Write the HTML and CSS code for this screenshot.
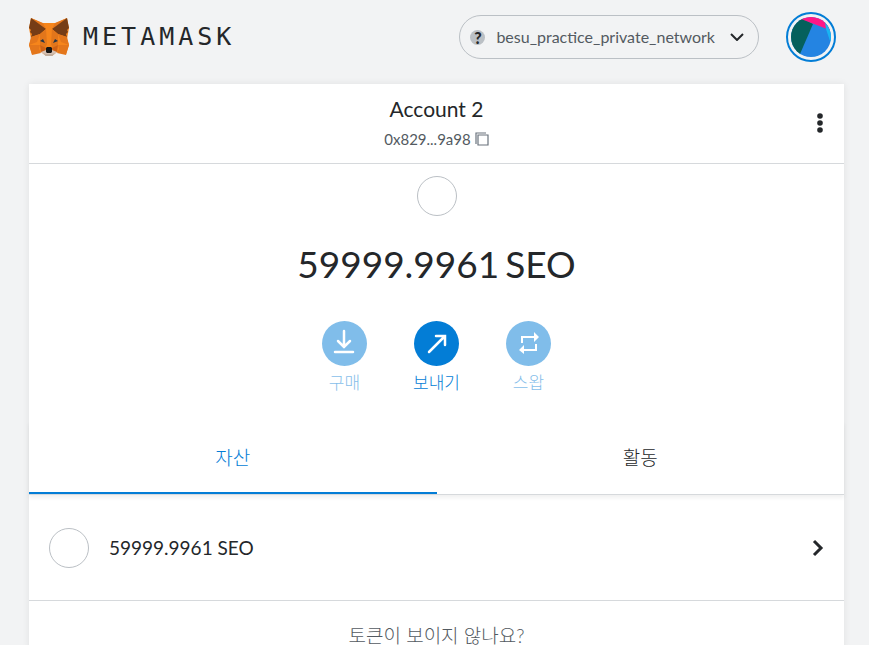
FILE: index.html
```html
<!DOCTYPE html>
<html lang="ko">
<head>
<meta charset="utf-8">
<meta name="viewport" content="width=device-width, initial-scale=1">
<title>MetaMask</title>
<link rel="stylesheet" href="styles.css">
</head>
<body>
<header class="header">
  <a class="brand" href="#" aria-label="MetaMask">
    <svg class="fox" viewBox="0 0 42 40" aria-hidden="true">
      <path fill="#f6851b" d="M3 1 14 6h14L39 1l2 10-2 11 2 6-3 9-9-2-5 4h-6l-5-4-9 2-3-9 2-6L1 11z"/>
      <path fill="#e4761b" d="M3 1 18 12l-3-6zM39 1 24 12l3-6zM1 28h11l-1 4 2 4-9 2zM41 28H30l1 4-2 4 9 2z"/>
      <path fill="#763d16" d="m3 1 15 11-6 5-9 3 1-3-2-2 1-2-2-2zM39 1 24 12l6 5 9 3-1-3 2-2-1-2 2-2z"/>
      <path fill="#e2761b" d="m12 17 6-5 1 15-2 4-5-3zM30 17l-6-5-1 15 2 4 5-3z"/>
      <path fill="#e4761b" d="m3 20 9-3-3 8-8 3zM39 20l-9-3 3 8 8 3z"/>
      <path fill="#cd6116" d="m12 28 6 3-1 4-4 0zM30 28l-6 3 1 4 4 0z"/>
      <path fill="#d7c1b3" d="m13 35 5-2h6l5 2-5 4h-6z"/>
      <path fill="#c0ad9e" d="m15 36 3 1h6l3-1-3 3h-6z"/>
      <path fill="#233447" d="m12 24 3-2 2 4zM30 24l-3-2-2 4z"/>
      <path fill="#161616" d="m18 31 1-1h4l1 1v4l-1 1h-4l-1-1z"/>
    </svg>
    <span class="wordmark">METAMASK</span>
  </a>
  <div class="controls">
    <button class="network" type="button">
      <span class="unknown" aria-hidden="true">?</span>
      <span>besu_practice_private_network</span>
      <svg class="caret" viewBox="0 0 14 8" aria-hidden="true"><path d="m1 1 6 6 6-6"/></svg>
    </button>
    <button class="avatar" type="button" aria-label="Account 2">
      <svg viewBox="0 0 40 40" aria-hidden="true">
        <defs><clipPath id="disc"><circle cx="20" cy="20" r="20"/></clipPath></defs>
        <g clip-path="url(#disc)">
          <path fill="#2484e2" d="M0 0h40v40H0z"/>
          <path fill="#05605c" d="M-2 0h11l13 7L9 37 0 40z"/>
          <path fill="#ff1686" d="M10 2 16-4h26v20l-6-4z"/>
          <path fill="#18b4f2" d="m34 5 8 0v18l-3 1-4-12z"/>
        </g>
      </svg>
    </button>
  </div>
</header>
<main class="card">
  <section class="account">
    <button class="account-name" type="button">
      <span class="name">Account 2</span>
      <span class="address">0x829...9a98
        <svg class="copy" viewBox="0 0 14 14" aria-hidden="true"><path d="M11 1H1v11M3 3h10v10H3z"/></svg>
      </span>
    </button>
    <button class="menu" type="button" aria-label="계정 옵션">
      <svg viewBox="0 0 6 20" aria-hidden="true"><circle cx="3" cy="3" r="2.800"/><circle cx="3" cy="10" r="2.800"/><circle cx="3" cy="17" r="2.800"/></svg>
    </button>
  </section>
  <section class="overview">
    <span class="token"></span>
    <div class="balance"><span>59999.9961</span><span>SEO</span></div>
    <div class="actions">
      <button class="action" type="button" disabled>
        <svg viewBox="0 0 45 45" aria-hidden="true"><circle cx="22.500" cy="22.500" r="22.500"/><path d="M22 10v16M16 20l6 6 6-6M13 31h18"/></svg>
        <span>구매</span>
      </button>
      <button class="action" type="button">
        <svg viewBox="0 0 45 45" aria-hidden="true"><circle cx="22.500" cy="22.500" r="22.500"/><path d="m15 31 15-15M22 15h9v9"/></svg>
        <span>보내기</span>
      </button>
      <button class="action" type="button" disabled>
        <svg viewBox="0 0 45 45" aria-hidden="true"><circle cx="22.500" cy="22.500" r="22.500"/><path class="thin" d="M16 22v-6h13M30 23v6H17"/><path class="head" d="m28 11 5 5-5 5zM18 24l-5 5 5 4z"/></svg>
        <span>스왑</span>
      </button>
    </div>
  </section>
  <nav class="tabs">
    <button class="tab active" type="button">자산</button>
    <button class="tab" type="button">활동</button>
  </nav>
  <button class="asset" type="button">
    <span class="token"></span>
    <span class="amount">59999.9961 SEO</span>
    <svg class="chevron" viewBox="0 0 12 18" aria-hidden="true"><path d="m2 2 7 7-7 7"/></svg>
  </button>
  <p class="missing">토큰이 보이지 않나요?</p>
</main>
</body>
</html>
```
FILE: styles.css
```css
* {
  box-sizing: border-box;
}

body {
  margin: 0;
  min-height: 100vh;
  display: flex;
  flex-direction: column;
  background: #f2f3f4;
  color: #24272a;
  font-family: Lato, "Noto Sans CJK KR", sans-serif;
  font-size: 16px;
}

button {
  margin: 0;
  padding: 0;
  border: 0;
  background: none;
  color: inherit;
  font: inherit;
  cursor: pointer;
}

svg {
  display: block;
}

.header {
  display: flex;
  align-items: center;
  justify-content: space-between;
  padding: 12px 33px 22px 28px;
}

.brand {
  display: flex;
  align-items: center;
  gap: 13px;
  color: #24272a;
  text-decoration: none;
}

.fox {
  width: 42px;
  height: 40px;
}

.wordmark {
  font-family: "DejaVu Sans Mono", monospace;
  font-size: 25px;
  line-height: 32px;
  letter-spacing: 4px;
}

.controls {
  display: flex;
  align-items: center;
  gap: 27px;
}

.network {
  display: flex;
  align-items: center;
  gap: 11px;
  height: 44px;
  padding: 0 14px 0 10px;
  border: 1px solid #bbc0c5;
  border-radius: 22px;
  color: #535a61;
  line-height: 20px;
}

.unknown {
  width: 15px;
  height: 15px;
  border-radius: 50%;
  background: #bbc0c5;
  color: #24272a;
  font-size: 16px;
  font-weight: 900;
  line-height: 15px;
  text-align: center;
}

.caret {
  width: 14px;
  height: 8px;
  margin-left: 4px;
}

.caret path {
  fill: none;
  stroke: #24272a;
  stroke-width: 2;
}

.avatar {
  width: 50px;
  height: 50px;
  padding: 3px;
  border: 2px solid #037dd6;
  border-radius: 50%;
}

.card {
  flex: 1;
  margin: 0 25px 0 29px;
  background: #fff;
  box-shadow: 0 0 7px rgba(0, 0, 0, 0.08);
}

.account {
  display: grid;
  grid-template-columns: 1fr auto 1fr;
  align-items: center;
  height: 80px;
  padding-bottom: 2px;
  border-bottom: 1px solid #d6d9dc;
}

.account-name {
  grid-column: 2;
  display: flex;
  flex-direction: column;
  align-items: center;
  gap: 6px;
}

.name {
  font-size: 21px;
  line-height: 26px;
}

.address {
  display: flex;
  align-items: center;
  gap: 4px;
  color: #535a61;
  font-size: 15px;
  line-height: 22px;
}

.copy {
  width: 14px;
  height: 14px;
}

.copy path {
  fill: none;
  stroke: #6a737d;
  stroke-width: 1.2;
}

.menu {
  justify-self: end;
  width: 6px;
  margin-right: 21px;
}

.menu svg {
  fill: #24272a;
}

.overview {
  display: flex;
  flex-direction: column;
  align-items: center;
  padding: 12px 16px 26px;
}

.token {
  flex: none;
  width: 40px;
  height: 40px;
  border: 1px solid #bbc0c5;
  border-radius: 50%;
  background: #fff;
}

.balance {
  display: flex;
  gap: 6px;
  margin: 24px 0 33px;
  font-size: 37px;
  line-height: 48px;
}

.actions {
  display: flex;
  gap: 32px;
}

.action {
  display: flex;
  flex-direction: column;
  align-items: center;
  gap: 5px;
  width: 60px;
  color: #037dd6;
  font-size: 17px;
  font-weight: 300;
  line-height: 24px;
}

.action:disabled {
  opacity: 0.5;
  cursor: default;
}

.action svg {
  width: 45px;
  height: 45px;
}

.action circle {
  fill: #037dd6;
}

.action path {
  fill: none;
  stroke: #fff;
  stroke-width: 2.5;
  stroke-linecap: round;
}

.action .thin {
  stroke-width: 2;
  stroke-linecap: butt;
}

.action .head {
  fill: #fff;
  stroke: none;
}

.tabs {
  display: flex;
  border-bottom: 1px solid #d6d9dc;
  box-shadow: 0 3px 4px rgba(0, 0, 0, 0.06);
}

.tab {
  flex: 1;
  height: 73px;
  border-bottom: 2px solid transparent;
  font-size: 19px;
  font-weight: 300;
}

.active {
  border-color: #037dd6;
  color: #037dd6;
}

.asset {
  display: flex;
  align-items: center;
  gap: 20px;
  width: 100%;
  height: 106px;
  padding: 0 20px;
  border-bottom: 1px solid #d6d9dc;
  text-align: left;
}

.amount {
  flex: 1;
  font-size: 19px;
}

.chevron {
  width: 12px;
  height: 18px;
}

.chevron path {
  fill: none;
  stroke: #24272a;
  stroke-width: 3;
}

.missing {
  margin: 0;
  padding: 22px 16px 0;
  color: #535a61;
  font-size: 19px;
  font-weight: 300;
  line-height: 26px;
  text-align: center;
}
```
